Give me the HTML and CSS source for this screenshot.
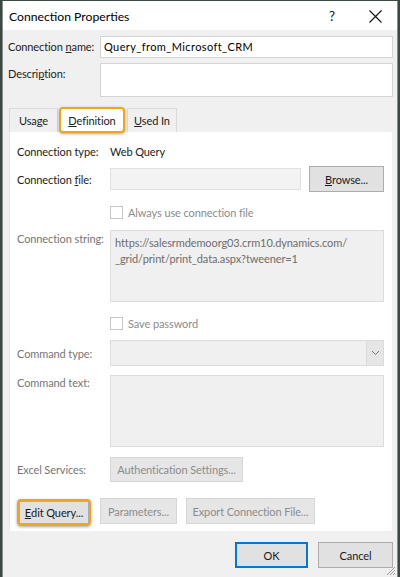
FILE: index.html
```html
<!DOCTYPE html>
<html>
<head>
<meta charset="utf-8">
<link rel="stylesheet" href="styles.css">
</head>
<body>
<div class="window">
  <div class="titlebar">
    <span class="title">Connection Properties</span>
    <span class="help">?</span>
    <span class="close"><svg width="13" height="13" viewBox="0 0 13 13"><path d="M0.5 0.5 L12.5 12.5 M12.5 0.5 L0.5 12.5" stroke="#111" stroke-width="1.1" fill="none"/></svg></span>
  </div>
  <div class="body">
    <div class="field-row">
      <span class="lbl">Connection <u>n</u>ame:</span>
      <div class="input name-input">Query_from_Microsoft_CRM</div>
    </div>
    <div class="field-row desc-row">
      <span class="lbl">Descri<u>p</u>tion:</span>
      <div class="input desc-input"></div>
    </div>
    <div class="tabs">
      <div class="tab tab-usage">Usa<u>g</u>e</div>
      <div class="tab tab-active"><u>D</u>efinition</div>
      <div class="tab tab-used"><u>U</u>sed In</div>
    </div>
    <div class="panel">
      <div class="prow r-type">
        <span class="plbl">Connection type:</span>
        <span class="val">Web Query</span>
      </div>
      <div class="prow r-file">
        <span class="plbl">Connection <u>f</u>ile:</span>
        <div class="ctl file-input"></div>
        <div class="btn browse"><u>B</u>rowse...</div>
      </div>
      <div class="prow r-check1">
        <span class="plbl"></span>
        <span class="check"></span>
        <span class="dis">Always use connection file</span>
      </div>
      <div class="prow r-str">
        <span class="plbl dis top">Connection string:</span>
        <div class="ctl str-box">https://salesrmdemoorg03.crm10.dynamics.com/<br>_grid/print/print_data.aspx?tweener=1</div>
      </div>
      <div class="prow r-check2">
        <span class="plbl"></span>
        <span class="check"></span>
        <span class="dis">Save password</span>
      </div>
      <div class="prow r-ctype">
        <span class="plbl dis">Command type:</span>
        <div class="ctl select">
          <span class="sel-arrow"><svg width="9" height="6" viewBox="0 0 9 6"><path d="M1 1 L4.5 4.5 L8 1" stroke="#7a7a7a" stroke-width="1" fill="none"/></svg></span>
        </div>
      </div>
      <div class="prow r-ctext">
        <span class="plbl dis top">Command text:</span>
        <div class="ctl ctext-box"></div>
      </div>
      <div class="prow r-excel">
        <span class="plbl dis">Excel Services:</span>
        <div class="btn dbtn auth">Authentication Settings...</div>
      </div>
      <div class="prow r-buttons">
        <div class="hl-wrap"><div class="btn edit"><u>E</u>dit Query...</div></div>
        <div class="btn dbtn params">Parameters...</div>
        <div class="btn dbtn export">Export Connection File...</div>
      </div>
    </div>
    <div class="footer">
      <div class="btn ok">OK</div>
      <div class="btn cancel">Cancel</div>
    </div>
    <svg class="grip" width="10" height="10" viewBox="0 0 10 10"><path d="M9 1 L1 9 M9 4 L4 9 M9 7 L7 9" stroke="#a0a0a0" stroke-width="1"/></svg>
  </div>
</div>
</body>
</html>
```
FILE: styles.css
```css
* { box-sizing: border-box; }
html, body { margin: 0; padding: 0; }
body {
  width: 400px;
  height: 577px;
  background: #3b4a40;
  font-family: Lato, "Open Sans", sans-serif;
  font-size: 11px;
  letter-spacing: -0.1px;
  color: #1e1e1e;
  overflow: hidden;
}
u { text-decoration: underline; text-underline-offset: 1px; }
.window {
  margin: 1px 2px 0 2px;
  height: 576px;
  background: #f0f0f0;
  border-left: 1px solid #8c8c8c;
  border-right: 1px solid #8c8c8c;
  display: flex;
  flex-direction: column;
}
.titlebar {
  height: 29px;
  flex-shrink: 0;
  background: #fff;
  display: flex;
  align-items: center;
  padding-left: 6px;
  padding-top: 1px;
}
.title { font-size: 12.2px; letter-spacing: 0; color: #000; flex: 1; white-space: nowrap; }
.help { font-size: 13.5px; width: 16px; margin-right: 24px; color: #111; }
.close { width: 13px; height: 13px; margin-right: 15px; display: flex; }
.body { position: relative; flex: 1; padding: 0 4px 0 5px; }
.field-row { display: flex; margin-top: 6px; }
.lbl { width: 92px; flex-shrink: 0; white-space: nowrap; padding-top: 4px; color: #222; }
.input { background: #fff; border: 1px solid #d4d4d4; flex: 1; }
.name-input { height: 22px; padding: 3px 0 0 3px; color: #000; letter-spacing: 0.4px; }
.desc-row { margin-top: 5px; }
.desc-input { height: 34px; }
.tabs { display: flex; margin-top: 10px; margin-left: 1px; height: 25px; align-items: flex-end; }
.tab {
  height: 24px;
  border: 1px solid #dadada;
  border-bottom: none;
  padding: 5px 0 0 0;
  text-align: center;
  color: #222;
  background: #f0f0f0;
  white-space: nowrap;
}
.tab-usage { width: 49px; }
.tab-active {
  width: 66px;
  height: 26px;
  background: #fff;
  border: 2px solid #f2a516;
  border-radius: 4px;
  box-shadow: 0 1px 3px rgba(0,0,0,0.35);
  padding-top: 5px;
  margin: 0 2px 0 1px;
  position: relative;
  top: 1px;
}
.tab-used { width: 50px; }
.panel {
  background: #fff;
  margin-left: 1px;
  width: 383px;
  height: 399px;
  padding: 10px 8px 0 7px;
  border-left: 1px solid #e6e6e6;
}
.prow { display: flex; align-items: center; }
.plbl { width: 93px; flex-shrink: 0; white-space: nowrap; color: #222; }
.plbl.top { align-self: flex-start; }
.dis { color: #8c8c8c; white-space: nowrap; }
.plbl.dis { color: #767676; }
.val { color: #222; }
.r-type { height: 18px; }
.r-file { height: 26px; margin-top: 6px; }
.ctl { border: 1px solid #dcdcdc; background: #f0f0f0; }
.file-input { width: 191px; height: 22px; background: #f3f3f3; border-color: #e0e0e0; }
.btn {
  border: 1px solid #c9c9c9;
  background: #e1e1e1;
  text-align: center;
  display: flex;
  align-items: center;
  justify-content: center;
  color: #1a1a1a;
  white-space: nowrap;
}
.browse { width: 75px; height: 26px; margin-left: 8px; border-color: #adadad; }
.r-check1 { height: 18px; margin-top: 11px; }
.check { width: 13px; height: 13px; border: 1px solid #c8c8c8; background: #fff; margin-right: 5px; }
.r-str { margin-top: 9px; align-items: flex-start; }
.r-str .plbl { padding-top: 2px; }
.str-box { width: 274px; height: 72px; padding: 4px 0 0 4px; color: #6d6d6d; line-height: 16px; }
.r-check2 { height: 18px; margin-top: 12px; }
.r-ctype { margin-top: 8px; }
.select { width: 274px; height: 26px; display: flex; justify-content: flex-end; }
.sel-arrow { width: 17px; height: 24px; border-left: 1px solid #d9d9d9; background: #e6e6e6; display: flex; align-items: center; justify-content: center; }
.r-ctext { margin-top: 9px; align-items: flex-start; }
.r-ctext .plbl { padding-top: 1px; }
.ctext-box { width: 274px; height: 72px; }
.r-excel { margin-top: 10px; }
.dbtn { color: #8c8c8c; border-color: #d6d6d6; background: #e6e6e6; }
.auth { width: 133px; height: 25px; }
.r-buttons { margin-top: 14px; }
.hl-wrap {
  border: 2px solid #f2a516;
  border-radius: 4px;
  box-shadow: 0 1px 3px rgba(0,0,0,0.35);
  margin-left: 0;
  margin-top: 3px;
}
.edit { width: 70px; height: 23px; border-color: #adadad; }
.params { width: 77px; height: 26px; margin-left: 9px; }
.export { width: 129px; height: 26px; margin-left: 9px; }
.footer { display: flex; justify-content: flex-end; margin-top: 11px; gap: 10px; }
.ok { width: 73px; height: 26px; border: 2px solid #0078d7; background: #e1e1e1; }
.cancel { width: 75px; height: 26px; border-color: #adadad; }
.grip { position: absolute; right: 1px; bottom: 1px; }
```
